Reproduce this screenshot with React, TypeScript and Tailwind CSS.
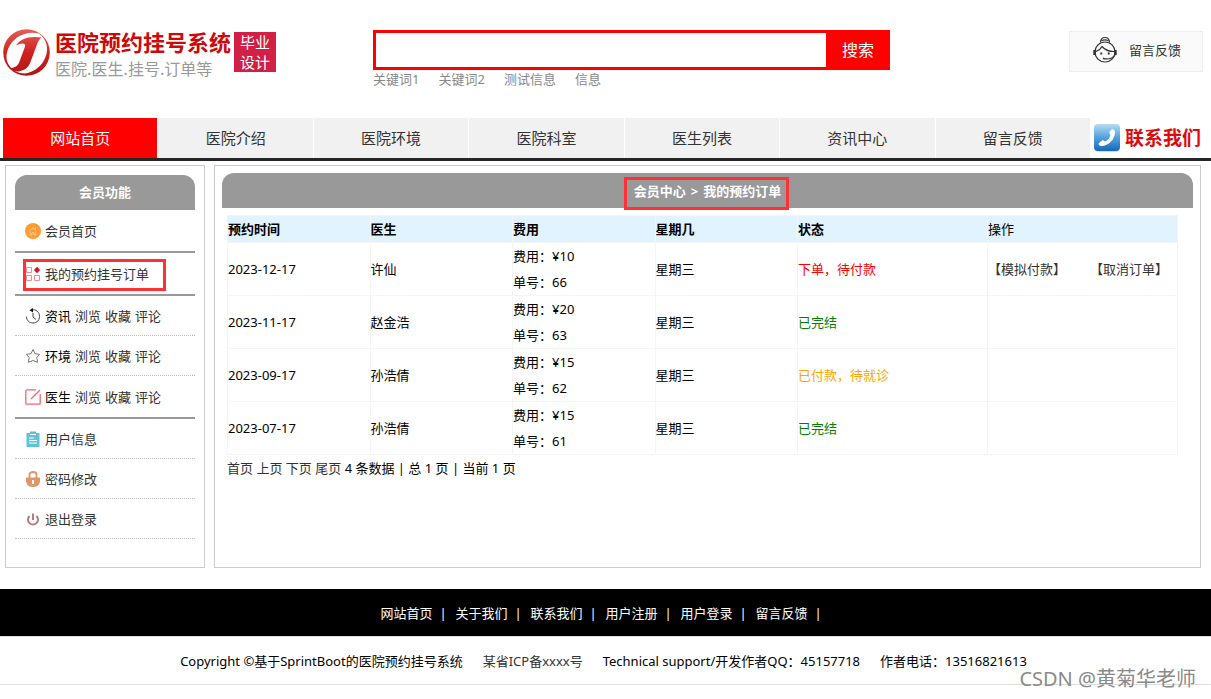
import React from "react";

const navItems = ["网站首页", "医院介绍", "医院环境", "医院科室", "医生列表", "资讯中心", "留言反馈"];
const keywords = ["关键词1", "关键词2", "测试信息", "信息"];
const footerLinks = ["网站首页", "关于我们", "联系我们", "用户注册", "用户登录", "留言反馈"];

type Order = { date: string; doctor: string; fee: string; no: string; status: string; color: string; open?: boolean };

const orders: Order[] = [
  { date: "2023-12-17", doctor: "许仙", fee: "¥10", no: "66", status: "下单，待付款", color: "text-[#ff0000]", open: true },
  { date: "2023-11-17", doctor: "赵金浩", fee: "¥20", no: "63", status: "已完结", color: "text-[#008000]" },
  { date: "2023-09-17", doctor: "孙浩倩", fee: "¥15", no: "62", status: "已付款，待就诊", color: "text-[#ffa500]" },
  { date: "2023-07-17", doctor: "孙浩倩", fee: "¥15", no: "61", status: "已完结", color: "text-[#008000]" },
];

function LogoMark() {
  return (
    <svg width="48" height="48" viewBox="0 0 48 48" className="shrink-0" aria-hidden="true">
      <defs>
        <linearGradient id="logoRed" gradientUnits="userSpaceOnUse" x1="0" y1="0" x2="0" y2="48">
          <stop offset="0" stopColor="#e5625c" />
          <stop offset="0.5" stopColor="#cf2320" />
          <stop offset="1" stopColor="#b01414" />
        </linearGradient>
      </defs>
      <circle cx="23.5" cy="24.5" r="23.3" fill="url(#logoRed)" />
      <path
        d="M36 5.500 C43.500 11 46 20 42.500 29 C39 38 31.500 44 22 45.500 C14 45.500 6.500 41 4 33 C2 25 6 15.500 14 9.500 C20.500 5 29 3.500 36 5.500 Z"
        fill="#fff"
      />
      <path
        d="M13 17.500 C17 11 26 7.500 38.500 9.500 C36 11.500 35 13.500 34 16.500 L27.500 34 C25.500 39.500 21.500 43 14 43.500 C11 43 9 42 7 40 C12.500 40 15 37.500 16.500 33.500 L22 18.500 C22.500 16.500 21.500 15.500 19.500 15.500 C17 15.500 15 16.500 13 17.500 Z"
        fill="url(#logoRed)"
      />
    </svg>
  );
}

function ServiceIcon() {
  return (
    <svg width="24" height="28" viewBox="0 0 24 28" fill="none" stroke="#333" strokeWidth="1.2" aria-hidden="true">
      <circle cx="12" cy="16" r="10" />
      <path d="M7.500 6.500 C7.500 3 9.500 1.500 12 1.500 C14.500 1.500 16.500 3 16.500 6.500 M8.500 4.500 C11 3.500 13 3.500 15.500 4.500" />
      <path d="M3 15.500 C6 14.500 8 12.500 9 10.500 C12 14 16 15.500 21 15.500" />
      <path d="M1.600 14 V19 M22.400 14 V19" strokeWidth="2.600" />
      <path d="M22 19 C20.500 21.500 18 23 13.500 23 M10 22 C11 23 13 23 14 22.500" />
      <path d="M7.300 17.500 H9.200 M14.800 17.500 H16.700" strokeWidth="1.800" />
    </svg>
  );
}

function PhoneBadge() {
  return (
    <svg width="28" height="30" viewBox="0 0 28 30" aria-hidden="true">
      <defs>
        <linearGradient id="phoneBlue" x1="0" y1="0" x2="0" y2="1">
          <stop offset="0" stopColor="#b9dcf3" />
          <stop offset="0.45" stopColor="#5aa7df" />
          <stop offset="1" stopColor="#1668b8" />
        </linearGradient>
      </defs>
      <rect x="1.500" y="3" width="25" height="26" rx="4" fill="#c9dcec" />
      <rect x="1" y="1" width="26" height="27" rx="4" fill="url(#phoneBlue)" />
      <path d="M18.500 6.500 C20 5.500 22 7 22 9.500 C22 16 15.500 23 8.500 23 C6.500 23 5 21.500 6 20 L9 17.500 C10 17 11 18 12 18.500 C15 17 17 14.500 17.500 12 C17 11 15.800 10.200 16.500 9 Z" fill="#fff" />
    </svg>
  );
}

function HomeIcon() {
  return (
    <svg width="16" height="16" viewBox="0 0 16 16" aria-hidden="true">
      <circle cx="8" cy="8" r="8" fill="#ff9c33" />
      <path d="M4 8.500 L8 4.700 L12 8.500 M5.300 8.500 V12 H7 V9.500 H9 V12 H10.700 V8.500 M10.500 4.200 V6.500" fill="none" stroke="#ffd09a" strokeWidth="0.800" />
    </svg>
  );
}

function GridIcon() {
  return (
    <svg width="16" height="16" viewBox="0 0 16 16" fill="none" stroke="#f08a92" aria-hidden="true">
      <path d="M1.500 1.500 H6.500 V6.500 H1.500 Z M1.500 9.500 H6.500 V14.500 H1.500 Z M9.500 9.500 H14.500 V14.500 H9.500 Z" />
      <path d="M12 0.800 L15.200 4 L12 7.200 L8.800 4 Z" fill="#dc1430" stroke="none" />
    </svg>
  );
}

function HistoryIcon() {
  return (
    <svg width="16" height="16" viewBox="0 0 16 16" fill="none" stroke="#444" aria-hidden="true">
      <path d="M6.500 2 C11 1 14.500 4 14.500 8.500 C14.500 12.500 11.500 15 8 15 C4.500 15 1.500 12.500 1.500 8.700 M8 5 V9 L11 11.500" />
      <path d="M4.500 2.300 L8 0 V4.600 Z" fill="#111" stroke="none" />
    </svg>
  );
}

function StarIcon() {
  return (
    <svg width="16" height="16" viewBox="0 0 16 16" fill="none" stroke="#777" aria-hidden="true">
      <path d="M8 1.500 L10 5.700 L14.500 6.300 L11.800 9.500 L12.600 14.300 L8 12.500 L3.400 14.300 L4.200 9.500 L1.500 6.300 L6 5.700 Z" strokeLinejoin="round" />
    </svg>
  );
}

function EditIcon() {
  return (
    <svg width="16" height="16" viewBox="0 0 16 16" fill="none" stroke="#f5676c" strokeWidth="1.300" aria-hidden="true">
      <path d="M11 0.800 H2 Q0.800 0.800 0.800 2 V14 Q0.800 15.200 2 15.200 H14 Q15.200 15.200 15.200 14 V5 M6 10 L15 1" />
    </svg>
  );
}

function ClipboardIcon() {
  return (
    <svg width="16" height="16" viewBox="0 0 16 16" aria-hidden="true">
      <path d="M1.500 2 H5 V0.500 H11 V2 H14.500 V16 H1.500 Z" fill="#5bc4d6" />
      <path d="M5 3.500 H11 M4 7 H9 M4 9.500 H12 M4 12 H12" stroke="#fff" strokeWidth="1" />
    </svg>
  );
}

function LockIcon() {
  return (
    <svg width="16" height="16" viewBox="0 0 16 16" aria-hidden="true">
      <path d="M4.500 7 V3.500 Q4.500 1 8 1 Q11.500 1 11.500 3.500 V7" fill="none" stroke="#e0956a" strokeWidth="1.800" />
      <path d="M1 6.500 H15 V10.500 Q14 16 8 16 Q2 16 1 10.500 Z" fill="#e0956a" />
      <path d="M7 9 H9 V13 H7 Z" fill="#fff" />
    </svg>
  );
}

function PowerIcon() {
  return (
    <svg width="16" height="16" viewBox="0 0 16 16" fill="none" stroke="#b87c7c" strokeWidth="2" aria-hidden="true">
      <path d="M4.500 5 A5 5 0 1 0 11.500 5 M8 2.500 V9" />
    </svg>
  );
}

type Entry = { icon: React.ReactNode; label: string; sub?: boolean; heavy?: boolean; marked?: boolean };

const entries: Entry[] = [
  { icon: <HomeIcon />, label: "会员首页", heavy: true },
  { icon: <GridIcon />, label: "我的预约挂号订单", heavy: true, marked: true },
  { icon: <HistoryIcon />, label: "资讯", sub: true },
  { icon: <StarIcon />, label: "环境", sub: true },
  { icon: <EditIcon />, label: "医生", sub: true, heavy: true },
  { icon: <ClipboardIcon />, label: "用户信息" },
  { icon: <LockIcon />, label: "密码修改" },
  { icon: <PowerIcon />, label: "退出登录" },
];

function SideEntry({ icon, label, sub, heavy, marked }: Entry) {
  return (
    <li
      className={
        "relative flex items-center gap-1 pl-[10px] " +
        (heavy ? "h-[43px] border-b-2 border-[#999]" : "h-10 border-b border-dotted border-[#bbb]")
      }
    >
      {icon}
      {sub ? (
        <span className="flex gap-1">
          <span className="text-black">{label}</span>
          <a href="#">浏览</a>
          <a href="#">收藏</a>
          <a href="#">评论</a>
        </span>
      ) : (
        <a href="#">{label}</a>
      )}
      {marked && <span className="pointer-events-none absolute top-1.5 left-2 h-8 w-[143px] border-3 border-[#fc3236]" />}
    </li>
  );
}

export default function App() {
  return (
    <div className="relative min-h-screen bg-white font-['Noto_Sans','Noto_Sans_CJK_SC',sans-serif] text-[13px] leading-[26px] text-[#333]">
      <header className="grid h-[118px] grid-cols-[370px_517px_1fr] items-start pl-[3px]">
        <a href="#" className="flex items-start pt-7">
          <LogoMark />
          <span className="flex flex-col pl-1 font-['Noto_Sans_CJK_SC',sans-serif]">
            <span className="text-[22px] leading-[26px] font-bold text-[#cc0a0a]">医院预约挂号系统</span>
            <span className="text-[16px] leading-7 text-[#999]">医院.医生.挂号.订单等</span>
          </span>
          <span className="mt-1 ml-[3px] w-[42px] bg-[#d21f45] text-center font-['Noto_Sans_CJK_SC',sans-serif] text-[15px] leading-[20px] text-white">
            毕业
            <br />
            设计
          </span>
        </a>
        <div className="pt-[30px]">
          <form className="flex h-10" onSubmit={(e) => e.preventDefault()}>
            <input aria-label="搜索" type="text" className="min-w-0 flex-1 border-3 border-r-0 border-[#ff0000] px-2 outline-none" />
            <button type="submit" className="w-16 bg-[#ff0000] text-[16px] text-white">
              搜索
            </button>
          </form>
          <div className="flex gap-[19px] leading-[18px] text-[#888]">
            {keywords.map((k) => (
              <a href="#" key={k}>
                {k}
              </a>
            ))}
          </div>
        </div>
        <a href="#" className="mt-[31px] mr-2 flex h-[41px] w-[134px] items-center gap-3 justify-self-end border border-[#eee] bg-[#fafafa] pb-[3px] pl-[23px]">
          <ServiceIcon />
          留言反馈
        </a>
      </header>

      <nav className="flex h-[43px] border-b-3 border-[#262626] pl-[3px] text-[15px]">
        {navItems.map((item, i) => (
          <a
            href="#"
            key={item}
            className={
              "flex flex-1 items-center justify-center border-r border-white " +
              (i === 0 ? "bg-[#ff0000] text-white" : "bg-[#f1f1f1]")
            }
          >
            {item}
          </a>
        ))}
        <a href="#" className="flex w-[120px] items-center gap-1 pl-[2px] text-[19px] font-bold text-[#dd0b0b]">
          <PhoneBadge />
          联系我们
        </a>
      </nav>

      <main className="flex min-h-[428px] gap-[9px] pt-1 pr-[10px] pb-[21px] pl-[5px]">
        <aside className="w-[200px] shrink-0 border border-[#ccc] p-[9px]">
          <h2 className="h-[35px] rounded-t-xl bg-[#999] text-center leading-[35px] font-bold text-white">会员功能</h2>
          <ul>
            {entries.map((e) => (
              <SideEntry key={e.label} {...e} />
            ))}
          </ul>
        </aside>

        <section className="min-w-0 flex-1 border border-[#ccc] p-[7px]">
          <h1 className="flex h-[35px] items-center justify-center rounded-t-xl bg-[#999] font-bold text-white">
            <span className="relative flex gap-[5px]">
              <span>会员中心</span>
              <span>&gt;</span>
              <span>我的预约订单</span>
              <span className="pointer-events-none absolute -top-px -right-2 -left-2.5 h-[33px] border-3 border-[#fc3236]" />
            </span>
          </h1>
          <div className="pt-[7px] pr-[15px] pl-[5px] text-black">
            <table className="w-full table-fixed border-collapse text-left [&_td]:border [&_td]:border-[#f5f5f5] [&_th]:border [&_th]:border-[#f5f5f5]">
              <thead>
                <tr className="bg-[#e1f3ff]">
                  <th className="w-[15%]">预约时间</th>
                  <th className="w-[15%]">医生</th>
                  <th className="w-[15%]">费用</th>
                  <th className="w-[15%]">星期几</th>
                  <th className="w-[20%]">状态</th>
                  <th className="w-[20%] font-normal">操作</th>
                </tr>
              </thead>
              <tbody>
                {orders.map((o) => (
                  <tr key={o.no}>
                    <td>{o.date}</td>
                    <td>{o.doctor}</td>
                    <td>
                      费用：{o.fee}
                      <br />
                      单号：{o.no}
                    </td>
                    <td>星期三</td>
                    <td className={o.color}>{o.status}</td>
                    <td className="text-[#333]">
                      {o.open && (
                        <span className="flex gap-6">
                          <a href="#">【模拟付款】</a>
                          <a href="#">【取消订单】</a>
                        </span>
                      )}
                    </td>
                  </tr>
                ))}
              </tbody>
            </table>
            <p>
              <span className="text-[#333]">
                <a href="#">首页</a> <a href="#">上页</a> <a href="#">下页</a> <a href="#">尾页</a>
              </span>{" "}
              4 条数据 | 总 1 页 | 当前 1 页
            </p>
          </div>
        </section>
      </main>

      <footer>
        <div className="flex h-[47px] items-center justify-center bg-black text-white">
          {footerLinks.map((l) => (
            <span key={l} className="flex w-[75px] gap-[7px]">
              <a href="#">{l}</a>
              <span>|</span>
            </span>
          ))}
        </div>
        <div className="flex h-[49px] items-center justify-center gap-5 border-y border-[#ddd] pr-1 text-black">
          <span>Copyright ©基于SprintBoot的医院预约挂号系统</span>
          <a href="#" className="text-[#333]">
            某省ICP备xxxx号
          </a>
          <span>Technical support/开发作者QQ：45157718</span>
          <span>作者电话：13516821613</span>
        </div>
      </footer>
      <span className="pointer-events-none absolute right-[15px] bottom-[7px] text-[20px] text-[#8a8a8a]">CSDN @黄菊华老师</span>
    </div>
  );
}
